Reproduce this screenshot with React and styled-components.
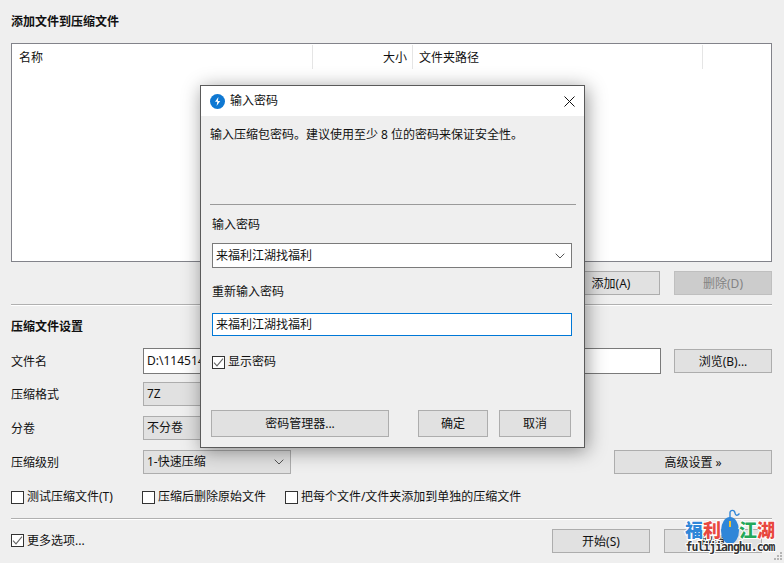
import React from "react";
import styled, { createGlobalStyle } from "styled-components";

const Global = createGlobalStyle`
  html, body { margin: 0; padding: 0; background: #efefef; }
  body { font: 12px/16px "Noto Sans", "Noto Sans CJK SC", sans-serif; color: #111; }
  * { box-sizing: border-box; }
`;

const Page = styled.div`
  position: relative; width: 784px; height: 563px; overflow: hidden;
  padding: 14px 12px 0 11px; background: #efefef;
  display: flex; flex-direction: column;
`;
const SectionTitle = styled.div`
  height: 16px; line-height: 16px; font-weight: 700; font-size: 12px; color: #111;
  margin-top: ${p => p.$top || 0}px;
`;
const ListBox = styled.div`
  height: 219px; margin-top: 13px; background: #fff; border: 1px solid #82838a;
`;
const ListHeader = styled.div`
  display: grid; grid-template-columns: 301px 100px 290px 1fr; height: 24px; margin-top: 1px;
`;
const HeadCell = styled.div`
  border-right: ${p => (p.$last ? "none" : "1px solid #e5e5e5")};
  padding: 5px ${p => (p.$right ? 5 : 6)}px 0 ${p => p.$pad || 6}px;
  text-align: ${p => (p.$right ? "right" : "left")};
`;
const Row = styled.div`
  display: flex; align-items: center; height: ${p => p.$h || 24}px; margin-top: ${p => p.$top || 0}px;
`;
const Divider = styled.div`
  height: 2px; margin-top: ${p => p.$top}px; background: #b0b0b0; border-bottom: 1px solid #fff;
`;
const Btn = styled.div`
  width: ${p => p.$w || 98}px; height: ${p => p.$h || 24}px;
  margin-left: ${p => p.$left || 0}px;
  padding-top: ${p => (p.$h ? 0 : 2)}px;
  flex: none; display: flex; align-items: center; justify-content: center;
  background: ${p => (p.$off ? "#cccccc" : "#e1e1e1")};
  border: 1px solid ${p => (p.$off ? "#bfbfbf" : "#adadad")};
  color: ${p => (p.$off ? "#838383" : "#111")};
`;
const Label = styled.div`
  width: 132px; flex: none; padding-top: 2px;
`;
const PathInput = styled.div`
  width: 518px; height: 26px; background: #fff; border: 1px solid #7a7a7a;
  padding: 4px 3px; white-space: nowrap; overflow: hidden;
`;
const Select = styled.div`
  width: 148px; height: 24px; display: flex; align-items: center; justify-content: space-between;
  padding: 0 6px 0 3px; background: #e1e1e1; border: 1px solid #adadad;
`;
const CheckWrap = styled.div`
  display: flex; align-items: center; gap: ${p => p.$gap || 3}px; margin-left: ${p => p.$left || 0}px;
`;
const Box = styled.div`
  width: 13px; height: 13px; flex: none; background: #fff; border: 1px solid #333;
  display: flex; align-items: center; justify-content: center;
  margin-top: ${p => (p.$up ? -2 : 0)}px;
`;
const Spacer = styled.div`flex: 1;`;
const RightGap = styled.div`flex: none; width: 10px;`;

const Dialog = styled.div`
  position: absolute; left: 200px; top: 85px; width: 385px; height: 363px;
  background: #efefef; border: 1px solid #5a5a5a;
  box-shadow: 2px 3px 18px rgba(0, 0, 0, 0.42);
  display: flex; flex-direction: column;
`;
const TitleBar = styled.div`
  height: 30px; flex: none; background: #fff; display: flex; align-items: center; padding: 0 9px;
  gap: 5px;
`;
const TitleText = styled.div`flex: 1;`;
const DialogBody = styled.div`
  padding: 11px 8px 0 9px; display: flex; flex-direction: column; flex: 1;
`;
const Desc = styled.div`height: 16px; letter-spacing: 0;`;
const DialogRule = styled.div`
  height: 1px; margin-top: 61px; background: #9a9a9a;
`;
const FieldLabel = styled.div`
  height: 16px; margin: ${p => p.$top}px 0 0 2px;
`;
const Field = styled.div`
  width: 360px; margin: ${p => p.$top}px 0 0 2px; height: ${p => p.$h}px;
  display: flex; align-items: center; justify-content: space-between;
  padding: 0 6px 0 3px; background: #fff;
  border: 1px solid ${p => (p.$focus ? "#0078d7" : "#7a7a7a")};
`;
const DialogCheck = styled.div`
  display: flex; align-items: center; gap: 3px; margin: 18px 0 0 2px; height: 16px;
`;
const DialogButtons = styled.div`
  display: flex; align-items: center; margin: 40px 0 0 1px;
`;

const Watermark = styled.div`
  position: absolute; left: 684px; top: 507px; width: 92px; height: 50px;
  display: flex; flex-direction: column; align-items: center;
`;
const LogoRow = styled.div`
  display: flex; align-items: flex-end; height: 34px; width: 90px;
`;
const LogoChar = styled.span`
  width: 18px; font-size: 18px; line-height: 20px; height: 22px; font-weight: 900; text-align: center;
  font-family: "Noto Sans CJK SC", sans-serif; color: ${p => p.$c};
  -webkit-text-stroke: 2px #fff; paint-order: stroke fill;
`;
const Domain = styled.div`
  font: 700 11.5px/14px "DejaVu Sans Mono", monospace; letter-spacing: -1px; color: #333;
  margin-top: -1px; -webkit-text-stroke: 2px #fff; paint-order: stroke fill; white-space: nowrap;
`;
const MouseSvg = styled.svg`
  flex: none; margin: 0 -1px -4px;
`;
const Grip = styled.svg`position: absolute; right: 1px; bottom: 2px;`;

const Chevron = () => (
  <svg width="10" height="6" viewBox="0 0 10 6" fill="none" stroke="#555" strokeWidth="1">
    <path d="M0.7 0.7L5 5L9.3 0.7" />
  </svg>
);
const Tick = () => (
  <svg width="11" height="11" viewBox="0 0 11 11" fill="none" stroke="#666" strokeWidth="1.1">
    <path d="M1 5.6L4 8.8L10 1.6" />
  </svg>
);
const AppIcon = () => (
  <svg width="15" height="15" viewBox="0 0 15 15">
    <circle cx="7.5" cy="7.5" r="7.5" fill="#0f78d2" />
    <path d="M8.4 3L5 7.8h2.3l-.7 4.2L10.2 7H7.9z" fill="#fff" />
  </svg>
);
const CloseIcon = () => (
  <svg width="11" height="11" viewBox="0 0 11 11" fill="none" stroke="#111" strokeWidth="1">
    <path d="M0.5 0.5L10.5 10.5M10.5 0.5L0.5 10.5" />
  </svg>
);
const Mouse = () => (
  <MouseSvg width="20" height="36" viewBox="0 0 20 36">
    <path d="M10 9V3.5C10 0.8 14.5 0.5 15 4C15.4 7 17.5 7 19.5 4.5" fill="none" stroke="#2f86d8" strokeWidth="1.4" />
    <ellipse cx="10" cy="21.5" rx="9" ry="13.5" fill="#2f86d8" />
    <rect x="9" y="12" width="2" height="6" fill="#f2c230" />
  </MouseSvg>
);

export default function App() {
  return (
    <Page>
      <Global />
      <SectionTitle>添加文件到压缩文件</SectionTitle>
      <ListBox>
        <ListHeader>
          <HeadCell $pad={7}>名称</HeadCell>
          <HeadCell $right>大小</HeadCell>
          <HeadCell>文件夹路径</HeadCell>
          <HeadCell $last />
        </ListHeader>
      </ListBox>
      <Row $top={9}>
        <Spacer />
        <Btn>添加(A)</Btn>
        <Btn $off $left={14}>删除(D)</Btn>
      </Row>
      <Divider $top={9} />
      <SectionTitle $top={13}>压缩文件设置</SectionTitle>
      <Row $h={26} $top={13}>
        <Label>文件名</Label>
        <PathInput>D:\11451419198100.7z</PathInput>
        <Btn $left={13}>浏览(B)...</Btn>
      </Row>
      <Row $top={8}>
        <Label>压缩格式</Label>
        <Select>7Z<Chevron /></Select>
      </Row>
      <Row $top={10}>
        <Label>分卷</Label>
        <Select>不分卷<Chevron /></Select>
      </Row>
      <Row $top={10}>
        <Label>压缩级别</Label>
        <Select>1-快速压缩<Chevron /></Select>
        <Spacer />
        <Btn $w={158}>高级设置 »</Btn>
      </Row>
      <Row $h={14} $top={16}>
        <CheckWrap><Box />测试压缩文件(T)</CheckWrap>
        <CheckWrap $left={29}><Box />压缩后删除原始文件</CheckWrap>
        <CheckWrap $left={19}><Box />把每个文件/文件夹添加到单独的压缩文件</CheckWrap>
      </Row>
      <Divider $top={14} />
      <Row $top={9}>
        <CheckWrap><Box $up><Tick /></Box>更多选项...</CheckWrap>
        <Spacer />
        <Btn>开始(S)</Btn>
        <Btn $left={14}>取消</Btn>
        <RightGap />
      </Row>

      <Dialog>
        <TitleBar>
          <AppIcon />
          <TitleText>输入密码</TitleText>
          <CloseIcon />
        </TitleBar>
        <DialogBody>
          <Desc>输入压缩包密码。建议使用至少 8 位的密码来保证安全性。</Desc>
          <DialogRule />
          <FieldLabel $top={12}>输入密码</FieldLabel>
          <Field $h={25} $top={10}>来福利江湖找福利<Chevron /></Field>
          <FieldLabel $top={16}>重新输入密码</FieldLabel>
          <Field $h={23} $focus $top={13}>来福利江湖找福利</Field>
          <DialogCheck><Box><Tick /></Box>显示密码</DialogCheck>
          <DialogButtons>
            <Btn $w={178} $h={27}>密码管理器...</Btn>
            <Btn $w={70} $h={27} $left={29}>确定</Btn>
            <Btn $w={72} $h={27} $left={11}>取消</Btn>
          </DialogButtons>
        </DialogBody>
      </Dialog>

      <Watermark>
        <LogoRow>
          <LogoChar $c="#2f86d8">福</LogoChar>
          <LogoChar $c="#e8483f">利</LogoChar>
          <Mouse />
          <LogoChar $c="#22a85a">江</LogoChar>
          <LogoChar $c="#e8483f">湖</LogoChar>
        </LogoRow>
        <Domain>fulijianghu.com</Domain>
      </Watermark>
      <Grip width="9" height="9" viewBox="0 0 9 9" fill="#b5b5b5">
        <rect x="6" y="0" width="2" height="2" />
        <rect x="3" y="3" width="2" height="2" />
        <rect x="6" y="3" width="2" height="2" />
        <rect x="0" y="6" width="2" height="2" />
        <rect x="3" y="6" width="2" height="2" />
        <rect x="6" y="6" width="2" height="2" />
      </Grip>
    </Page>
  );
}
